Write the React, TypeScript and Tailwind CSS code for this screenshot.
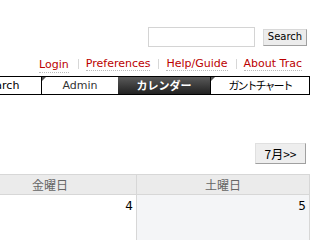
import React from "react";

const days = [
  { label: "日曜日", num: 30 },
  { label: "月曜日", num: 31 },
  { label: "火曜日", num: 1 },
  { label: "水曜日", num: 2 },
  { label: "木曜日", num: 3 },
  { label: "金曜日", num: 4 },
  { label: "土曜日", num: 5 },
];

const metaLinks = ["Login", "Preferences", "Help/Guide", "About Trac"];

export default function App() {
  return (
    <div
      className="w-[320px] h-[240px] overflow-hidden bg-white flex items-start justify-end pr-[10px]"
      style={{ fontFamily: "'DejaVu Sans', Verdana, 'Noto Sans CJK JP', sans-serif" }}
    >
      <div className="w-[1211px] shrink-0 flex flex-col items-end">
        {/* search box */}
        <div className="flex items-center mt-[27px] h-[20px] pr-[3px]">
          <input className="w-[107px] h-[20px] border border-[#d4d4d4] bg-white" />
          <button className="ml-[8px] w-[44px] h-[17px] border border-[#a0a0a0] border-t-[#d8d8d8] border-l-[#d8d8d8] bg-[#ececec] text-[10px] leading-none text-black flex items-center justify-center">
            Search
          </button>
        </div>

        {/* meta nav */}
        <ul className="flex mt-[10px] h-[14px] items-center text-[11px] leading-none">
          {metaLinks.map((l, i) => (
            <li
              key={l}
              className={
                i === 0
                  ? "pr-[9px]"
                  : "border-l border-[#d7d7d7] pl-[7px] pr-[8px] h-[10px] flex items-center"
              }
            >
              <span className="text-[#b00] border-b border-dotted border-[#bbb] pb-[1px]">{l}</span>
            </li>
          ))}
        </ul>

        {/* main nav */}
        <ul className="flex mt-[5px] h-[19px] border-y border-black text-[11px] leading-none">
          <li className="relative w-[82px] border-l border-black flex items-center justify-center">
            Search
          </li>
          <li className="relative w-[77px] border-l border-black flex items-center justify-center text-[#333]">
            <span className="absolute left-0 top-0 w-0 h-0 border-t-[4px] border-r-[4px] border-t-[#555] border-r-transparent" />
            Admin
          </li>
          <li
            className="w-[92px] flex items-center justify-center font-bold text-white bg-gradient-to-b from-[#5a5a5a] to-[#222] text-[11px]"
            style={{ fontFamily: "'Noto Sans CJK JP', sans-serif" }}
          >
            カレンダー
          </li>
          <li
            className="relative w-[100px] border-x border-black flex items-center justify-center text-black text-[11px] tracking-[-2px]"
            style={{ fontFamily: "'Noto Sans CJK JP', sans-serif" }}
          >
            <span className="absolute left-0 top-0 w-0 h-0 border-t-[4px] border-r-[4px] border-t-[#555] border-r-transparent" />
            ガントチャート
          </li>
        </ul>

        {/* month navigation */}
        <div className="mt-[48px] pr-[4px]">
          <button
            className="w-[51px] h-[21px] border border-[#a0a0a0] border-t-[#e0e0e0] border-l-[#e0e0e0] bg-[#eeeeee] text-[12px] leading-none text-black flex items-center justify-center"
            style={{ fontFamily: "'Noto Sans CJK JP', sans-serif" }}
          >
            7月&gt;&gt;
          </button>
        </div>

        {/* calendar */}
        <table
          className="mt-[10px] border-collapse table-fixed w-[1211px]"
          style={{ fontFamily: "'Noto Sans CJK JP', sans-serif" }}
        >
          <thead>
            <tr>
              {days.map((d) => (
                <th
                  key={d.label}
                  className="w-[173px] h-[20px] border border-[#d7d7d7] bg-[#ebebeb] text-[12px] font-normal text-[#666] leading-none"
                >
                  {d.label}
                </th>
              ))}
            </tr>
          </thead>
          <tbody>
            <tr>
              {days.map((d, i) => (
                <td
                  key={d.label}
                  className={
                    "h-[60px] border border-[#d7d7d7] align-top text-right pr-[3px] pt-[3px] text-[12px] leading-[16px] text-black " +
                    (i === 6 || i === 0 ? "bg-[#f4f5f7]" : "bg-white")
                  }
                  style={{ fontFamily: "'DejaVu Sans', sans-serif" }}
                >
                  {d.num}
                </td>
              ))}
            </tr>
          </tbody>
        </table>
      </div>
    </div>
  );
}
